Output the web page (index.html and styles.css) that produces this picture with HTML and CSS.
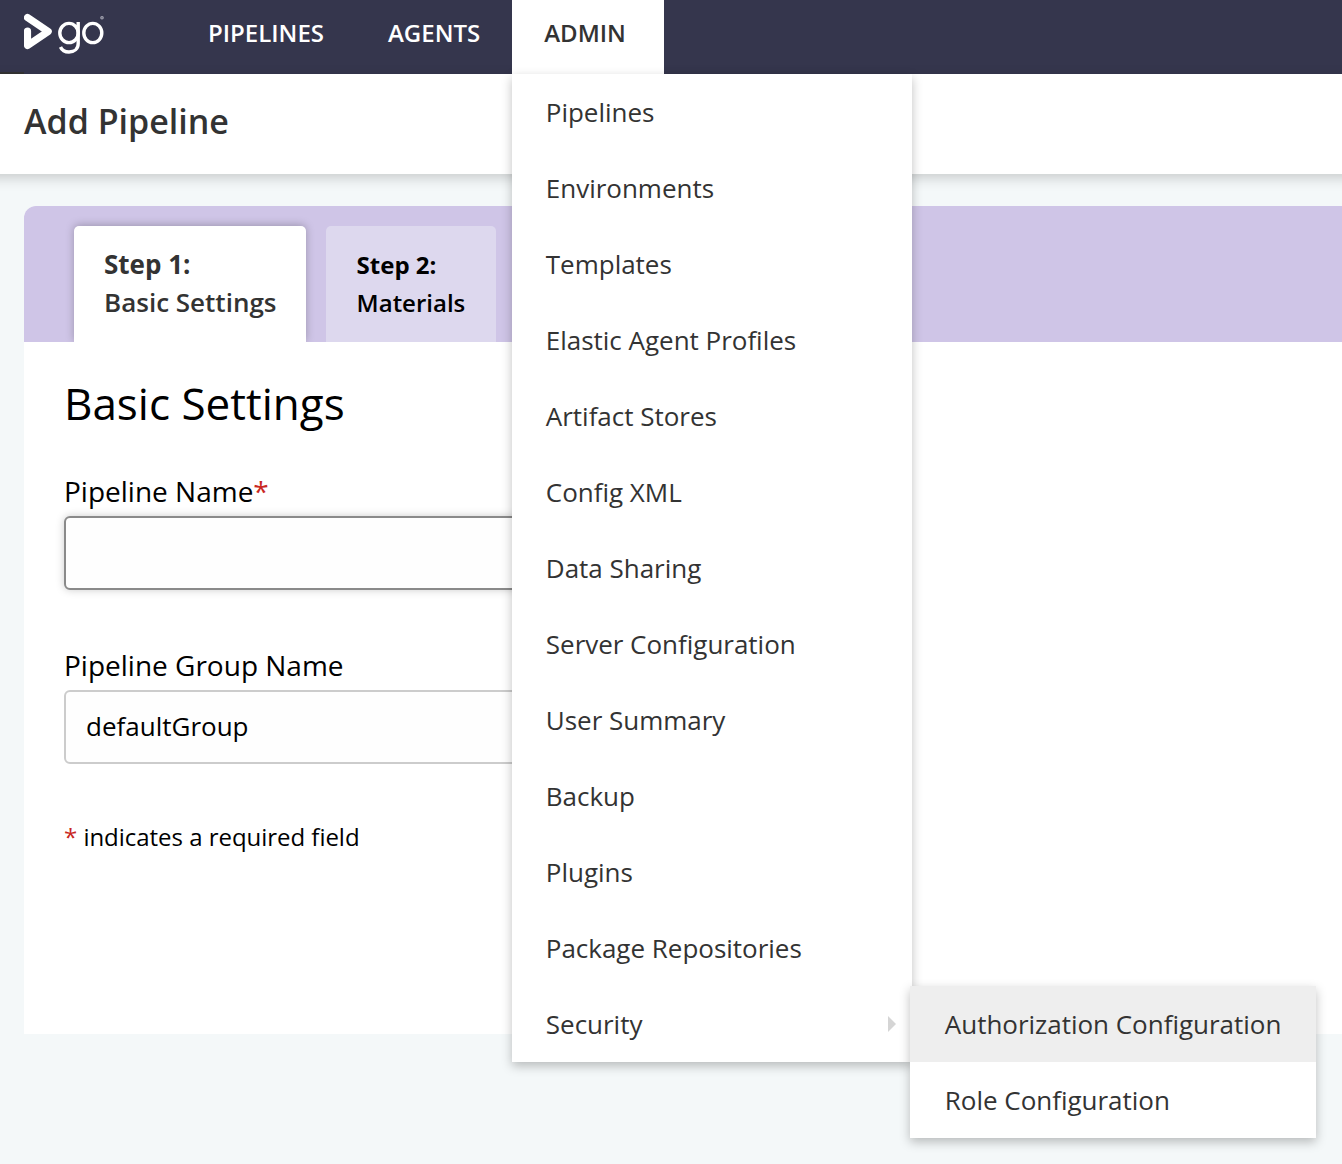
FILE: index.html
```html
<!DOCTYPE html>
<html lang="en">
<head>
<meta charset="utf-8">
<title>Add Pipeline</title>
<link rel="stylesheet" href="styles.css">
</head>
<body>
<header class="topbar">
  <a class="logo"><svg width="84" height="46" viewBox="24 11 84 46" fill="none" stroke="#fff"><path d="M27.500 17.500L48.200 31.500L27.500 45.500V31" stroke-width="7.200" stroke-linecap="round" stroke-linejoin="round"/><g stroke-width="3.400"><ellipse cx="69" cy="33" rx="9.200" ry="9.600"/><path d="M78.200 22V43.500C78.200 49 74 52 69 52C65 52 62 50.500 60.500 47"/><ellipse cx="92.800" cy="33" rx="9" ry="9.600"/></g><circle cx="102" cy="17.800" r="1.200" stroke="#a5a6b3" stroke-width="1.200"/></svg></a>
  <nav class="nav">
    <a class="nav-item">PIPELINES</a>
    <a class="nav-item">AGENTS</a>
    <div class="nav-item active">ADMIN
      <ul class="menu">
        <li>Pipelines</li><li>Environments</li><li>Templates</li><li>Elastic Agent Profiles</li><li>Artifact Stores</li><li>Config XML</li><li>Data Sharing</li><li>Server Configuration</li><li>User Summary</li><li>Backup</li><li>Plugins</li><li>Package Repositories</li>
        <li class="parent">Security
          <ul class="submenu"><li class="hover">Authorization Configuration</li><li>Role Configuration</li></ul>
        </li>
      </ul>
    </div>
  </nav>
</header>
<div class="page-head"><h1>Add Pipeline</h1></div>
<main class="wizard">
  <div class="tabs">
    <div class="tab current"><b>Step 1:</b><span>Basic Settings</span></div>
    <div class="tab"><b>Step 2:</b><span>Materials</span></div>
  </div>
  <form class="panel">
    <h2>Basic Settings</h2>
    <label class="name">Pipeline Name<i>*</i></label>
    <div class="field focus"></div>
    <label class="group">Pipeline Group Name</label>
    <div class="field">defaultGroup</div>
    <p class="note"><i>*</i> indicates a required field</p>
  </form>
</main>
</body>
</html>
```
FILE: styles.css
```css
* { box-sizing: border-box; }
body { margin: 0; height: 1164px; overflow: hidden; background: #f4f8f9; color: #333; font-family: "Open Sans", sans-serif; }
h1, h2, p, ul { margin: 0; padding: 0; }
ul { list-style: none; }
i { font-style: normal; color: #c9281f; }
.topbar { display: flex; height: 74px; background: linear-gradient(#333, #333) 0 100% / 24px 2px no-repeat #35364d; }
.logo { width: 176px; padding: 11px 0 0 24px; }
.nav { display: flex; height: 74px; }
.nav-item { padding: 0 32px; line-height: 65px; font-size: 24px; font-weight: 600; color: #fff; white-space: nowrap; }
.nav-item.active { position: relative; width: 152px; background: #fff; color: #333; }
.menu { position: absolute; z-index: 2; left: 0; top: 74px; width: 400px; background: #fff; box-shadow: 0 4px 10px rgba(0,0,0,.25); font-weight: 400; font-size: 26px; letter-spacing: -.02px; }
.menu li { height: 76px; line-height: 77px; padding-left: 33.600px; }
.menu .parent { position: relative; }
.parent::after { content: ""; position: absolute; left: 376px; top: 30px; border-left: 8px solid #d5d5d5; border-top: 8px solid transparent; border-bottom: 8px solid transparent; }
.submenu { position: absolute; left: 398px; top: 0; width: 406px; background: #fff; box-shadow: 0 4px 10px rgba(0,0,0,.25); }
.menu .submenu li { padding-left: 34.600px; }
.submenu .hover { background: #eee; }
.page-head { height: 100px; margin: 0 -24px; padding: 23px 48px; background: #fff; box-shadow: 0 4px 12px rgba(0,0,0,.18); }
h1 { font-size: 34px; line-height: 48px; font-weight: 600; }
.wizard { margin: 32px 0 0 24px; height: 828px; background: #fff; border-radius: 12px 0 0; color: #000; }
.tabs { display: flex; align-items: flex-end; gap: 20px; height: 136px; padding-left: 50px; overflow: hidden; background: #cfc5e7; border-radius: 12px 0 0; }
.tab { display: flex; flex-direction: column; width: 170px; height: 116px; padding: 20px 0 0 30.600px; background: #ddd8ee; border-radius: 5px 5px 0 0; font-size: 24px; line-height: 38px; font-weight: 600; }
.tab b { font-weight: 700; }
.tab.current { width: 232px; padding: 19px 0 0 30px; background: #fff; color: #333; font-size: 26px; box-shadow: 0 -1px 8px rgba(0,0,0,.25); }
.panel { padding: 31px 40px; }
h2 { font-size: 44px; line-height: 60px; font-weight: 400; }
label { display: block; font-size: 28px; line-height: 40px; }
.name { margin-top: 38px; }
.group { margin-top: 55px; }
.field { width: 700px; height: 74px; margin-top: 5px; padding-left: 20px; border: 2px solid #ccc; border-radius: 6px; background: #fefefe; font-size: 26px; line-height: 68px; }
.field.focus { border-color: #8a8a8a; box-shadow: 0 0 8px #ccc; }
.note { margin-top: 55px; font-size: 24px; line-height: 36px; letter-spacing: -.03px; }
```
